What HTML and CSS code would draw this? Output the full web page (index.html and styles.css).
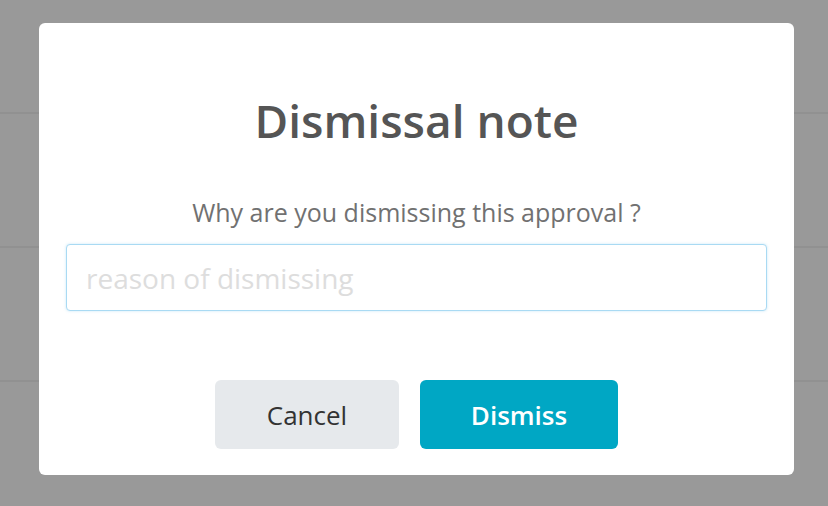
FILE: index.html
```html
<!DOCTYPE html>
<html>
<head>
	<meta charset="UTF-8">
	<title>Dismissal note</title>
	<link rel="stylesheet" href="styles.css">
</head>
<body>
	<div class="backdrop">
		<div class="rows">
			<div class="row"></div>
			<div class="row"></div>
			<div class="row"></div>
		</div>
		<div class="modal">
			<h1 class="modal-title">Dismissal note</h1>
			<p class="modal-text">Why are you dismissing this approval ?</p>
			<input class="modal-input" type="text" placeholder="reason of dismissing" />
			<div class="modal-actions">
				<button class="btn btn-cancel">Cancel</button>
				<button class="btn btn-dismiss">Dismiss</button>
			</div>
		</div>
	</div>
</body>
</html>
```

FILE: styles.css
```css
* {
	box-sizing: border-box;
}

body {
	margin: 0;
	height: 100vh;
	background: #999;
	font-family: "Open Sans", sans-serif;
	overflow: hidden;
}

.backdrop {
	position: relative;
	height: 506px;
	padding: 23px 34px 0 39px;
}

/* page rows behind the overlay */
.rows {
	position: absolute;
	inset: 0;
	padding-top: 112px;
}

.row {
	height: 134px;
	border-top: 2px solid #919191;
}

.modal {
	position: relative;
	width: 755px;
	height: 452px;
	background: #fff;
	border-radius: 6px;
	padding: 0 27px;
	display: flex;
	flex-direction: column;
	align-items: center;
}

.modal-title {
	margin: 69px 0 0;
	font-size: 46px;
	font-weight: 600;
	line-height: 56px;
	color: #555;
}

.modal-text {
	margin: 48px 0 0;
	font-size: 25px;
	line-height: 32px;
	color: #717171;
}

.modal-input {
	margin-top: 16px;
	width: 701px;
	height: 67px;
	padding: 0 19px;
	border: 1px solid #a9daf3;
	border-radius: 4px;
	box-shadow: 0 0 3px rgba(102, 190, 235, 0.35);
	font-family: "Open Sans", sans-serif;
	font-size: 28px;
	color: #333;
	outline: none;
}

.modal-input::placeholder {
	color: #ddd;
}

.modal-actions {
	margin-top: 69px;
	display: flex;
	gap: 21px;
}

.btn {
	height: 69px;
	border: none;
	border-radius: 6px;
	font-family: "Open Sans", sans-serif;
	font-size: 26px;
	cursor: pointer;
}

.btn-cancel {
	width: 184px;
	background: #e6e9ec;
	color: #333;
}

.btn-dismiss {
	width: 198px;
	background: #00a7c4;
	color: #fff;
	font-weight: 600;
}
```
